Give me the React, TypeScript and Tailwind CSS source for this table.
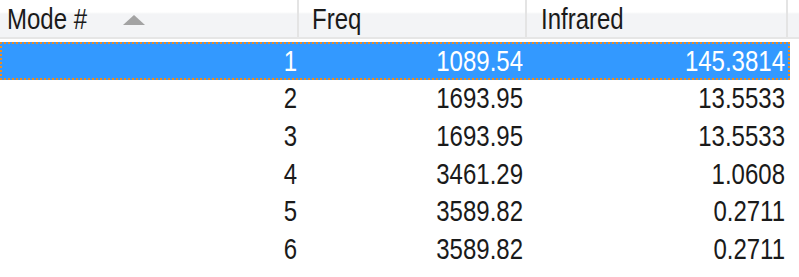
import React from "react";

const rows = [
  ["1", "1089.54", "145.3814"],
  ["2", "1693.95", "13.5533"],
  ["3", "1693.95", "13.5533"],
  ["4", "3461.29", "1.0608"],
  ["5", "3589.82", "0.2711"],
  ["6", "3589.82", "0.2711"],
];

const font = { fontFamily: '"Liberation Sans", Arial, sans-serif' };

function T({ children }: { children: React.ReactNode }) {
  return <span className="inline-block scale-y-[1.25] origin-center">{children}</span>;
}

export default function App() {
  return (
    <div className="w-[799px] h-[277px] bg-white overflow-hidden text-[24px] text-[#1a1a1a]" style={font}>
      <div className="flex h-[39px] bg-[linear-gradient(to_bottom,#ffffff_0px,#ffffff_12px,#f3f4f6_14px,#f3f4f6_37px)] border-b-2 border-[#e6e6e6]">
        <div className="w-[299px] flex items-center pl-[7px] border-r-2 border-[#e4e4e4] relative">
          <T>Mode #</T>
          <svg className="absolute left-[123px] top-[15px]" width="22" height="10" viewBox="0 0 22 10">
            <polygon points="11,0 22,10 0,10" fill="#a3a3a3" />
          </svg>
        </div>
        <div className="w-[228px] flex items-center pl-[13px] border-r-2 border-[#e4e4e4]">
          <T>Freq</T>
        </div>
        <div className="w-[261px] flex items-center pl-[14px] border-r-2 border-[#e4e4e4]">
          <T>Infrared</T>
        </div>
        <div className="flex-1" />
      </div>
      <div className="pt-[3px]">
        {rows.map((r, i) => {
          const sel = i === 0;
          return (
            <div
              key={i}
              className={
                "flex h-[37.6px] w-[790px] items-center " +
                (sel ? "bg-[#3399ff] text-white border-2 border-dotted border-[#f08a1c]" : "border-2 border-transparent")
              }
            >
              <div className="w-[297px] text-right pr-[2px]"><T>{r[0]}</T></div>
              <div className="w-[228px] text-right pr-[4px]"><T>{r[1]}</T></div>
              <div className="w-[261px] text-right pr-[3px]"><T>{r[2]}</T></div>
            </div>
          );
        })}
      </div>
    </div>
  );
}
